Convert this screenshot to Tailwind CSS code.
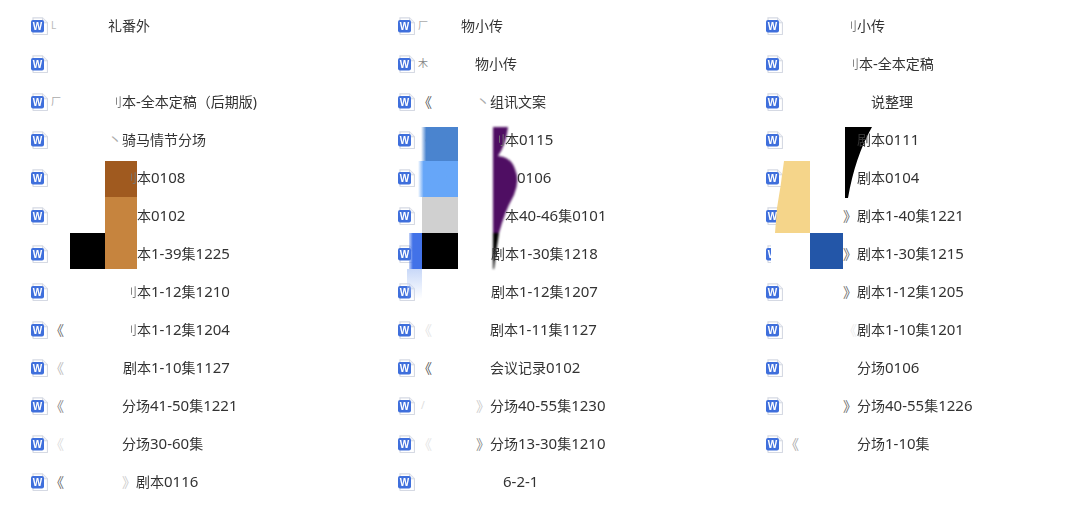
<!DOCTYPE html>
<html lang="en">
<head>
  <meta charset="UTF-8" />
  <title>Word files</title>
  <script src="https://cdn.jsdelivr.net/npm/@tailwindcss/browser@4"></script>
</head>
<body class="bg-white font-['Noto_Sans','Noto_Sans_CJK_SC',sans-serif] text-[14px] text-[#333]">

  <svg class="hidden">
    <symbol id="doc" viewBox="0 0 18 18">
      <path d="M3 .8h9.5L17.5 5.8v10.9a1 1 0 0 1-1 1H4a1 1 0 0 1-1-1z" fill="#fff" stroke="#d5d9e3" stroke-width="1.2" />
      <path d="M12.5 .8V5.8h5" fill="#eef1f6" stroke="#d5d9e3" />
      <rect x="1" y="3" width="13" height="12.5" rx="2" fill="#3f6fdc" />
    </symbol>
  </svg>

  <div class="relative w-[1080px] h-[515px] overflow-hidden">
    <div id="files" class="grid grid-cols-[367px_368px_1fr] pl-[30px] pt-[7px]"></div>

    <!-- colour blocks that sit over the file names -->
    <div class="absolute left-[105px] top-[161px] w-[32px] h-[36px] bg-[#a05a1f] blur-[0.6px]"></div>
    <div class="absolute left-[105px] top-[197px] w-[32px] h-[72px] bg-[#c6843e] blur-[0.6px]"></div>
    <div class="absolute left-[70px] top-[233px] w-[35px] h-[36px] bg-black"></div>

    <div class="absolute left-[421px] top-[127px] w-[37px] h-[34px] bg-linear-to-r from-[#4a84cf]/0 to-[#4a84cf] to-[14%]"></div>
    <div class="absolute left-[418px] top-[161px] w-[40px] h-[36px] bg-linear-to-r from-[#66a6f8]/0 to-[#66a6f8] to-[14%]"></div>
    <div class="absolute left-[422px] top-[197px] w-[36px] h-[36px] bg-[#d0d0d0]"></div>
    <div class="absolute left-[409px] top-[233px] w-[13px] h-[36px] bg-linear-to-r from-[#4272e8]/30 to-[#4272e8] to-[30%]"></div>
    <div class="absolute left-[407px] top-[269px] w-[15px] h-[30px] bg-linear-to-b from-[#c8d8f8] to-[#c8d8f8]/0"></div>
    <div class="absolute left-[422px] top-[233px] w-[36px] h-[36px] bg-black"></div>
    <svg class="absolute left-[493px] top-[127px] blur-[0.8px]" width="30" height="142" viewBox="0 0 30 142">
      <path d="M0 0H15Q13 18 5 29Q18 30 22 42Q27 54 21 68Q12 84 6 106H0z" fill="#4f0e63" />
      <path d="M0 106H6Q3 125 1 142H0z" fill="#000" />
    </svg>

    <svg class="absolute left-[845px] top-[127px] blur-[0.4px]" width="28" height="72" viewBox="0 0 28 72">
      <path d="M0 0H27Q10 30 3 71H0z" fill="#000" />
    </svg>
    <svg class="absolute left-[775px] top-[161px]" width="35" height="72" viewBox="0 0 35 72">
      <path d="M9 0H35V72H0Q1 60 2 47Q6 24 9 0z" fill="#f5d58a" />
    </svg>
    <div class="absolute left-[771px] top-[233px] w-[39px] h-[36px] bg-white"></div>
    <div class="absolute left-[810px] top-[233px] w-[33px] h-[36px] bg-[#2356a8]"></div>
  </div>

  <script>
    // [gap from icon to name, mark on the left, its classes, mark before the name, its colour, name]
    const columns = [
      [
        [60, "L", "ml-[3px] text-[10px] text-[#bbb]", "", "", "礼番外"],
        [60, "", "", "", "", ""],
        [60, "厂", "ml-[3px] text-[10px] text-[#aaa]", "", "", "刂本-全本定稿（后期版)"],
        [74, "", "", "丶", "text-[#aaa]", "骑马情节分场"],
        [75, "", "", "", "", "刂本0108"],
        [89, "", "", "", "", "本0102"],
        [89, "", "", "", "", "本1-39集1225"],
        [75, "", "", "", "", "刂本1-12集1210"],
        [75, "《", "ml-[2px] text-[#666]", "", "", "刂本1-12集1204"],
        [75, "《", "ml-[2px] text-[#bbb]", "", "", "剧本1-10集1127"],
        [74, "《", "ml-[2px] text-[#888]", "", "", "分场41-50集1221"],
        [74, "《", "ml-[2px] text-[#ddd]", "", "", "分场30-60集"],
        [88, "《", "ml-[2px] text-[#666]", "》", "text-[#ccc]", "剧本0116"]
      ],
      [
        [46, "厂", "ml-[3px] text-[10px] text-[#aaa]", "", "", "物小传"],
        [60, "木", "ml-[3px] text-[10px] text-[#888]", "", "", "物小传"],
        [75, "《", "ml-[3px] text-[#555]", "丶", "text-[#aaa]", "组讯文案"],
        [76, "《", "ml-[3px] text-[#888]", "", "", "刂本0115"],
        [102, "", "", "", "", "0106"],
        [90, "", "", "", "", "本40-46集0101"],
        [76, "", "", "", "", "剧本1-30集1218"],
        [76, "", "", "", "", "剧本1-12集1207"],
        [75, "《", "ml-[3px] text-[#e5e5e5]", "", "", "剧本1-11集1127"],
        [75, "《", "ml-[3px] text-[#555]", "", "", "会议记录0102"],
        [75, "/", "ml-[6px] text-[10px] text-[#ddd]", "》", "text-[#ccc]", "分场40-55集1230"],
        [75, "《", "ml-[3px] text-[#e5e5e5]", "》", "text-[#888]", "分场13-30集1210"],
        [88, "", "", "", "", "6-2-1"]
      ],
      [
        [60, "", "", "", "", "刂小传"],
        [62, "", "", "", "", "刂本-全本定稿"],
        [88, "", "", "", "", "说整理"],
        [74, "", "", "", "", "剧本0111"],
        [74, "", "", "", "", "剧本0104"],
        [74, "", "", "》", "text-[#666]", "剧本1-40集1221"],
        [74, "", "", "》", "text-[#666]", "剧本1-30集1215"],
        [74, "", "", "》", "text-[#666]", "剧本1-12集1205"],
        [74, "", "", "《", "text-[#eee]", "剧本1-10集1201"],
        [74, "", "", "", "", "分场0106"],
        [74, "", "", "》", "text-[#666]", "分场40-55集1226"],
        [74, "《", "ml-[2px] text-[#aaa]", "", "", "分场1-10集"]
      ]
    ];

    const files = document.getElementById("files");

    // digits and hyphens run a little larger than the Chinese around them,
    // and the half-hidden 刂 sits smaller, against the next character
    const sized = name => name
      .replace(/[0-9-]+/g, m => `<span class="text-[15px]">${m}</span>`)
      .replace("刂", `<span class="inline-block w-[14px] pl-[2px] text-[12px] text-[#777]">刂</span>`);

    columns.forEach(rows => {
      const col = document.createElement("div");
      rows.forEach(([gap, left, leftClass, before, beforeClass, name]) => {
        const row = document.createElement("div");
        row.className = "flex items-center h-[38px] whitespace-nowrap";
        row.innerHTML = `
          <span class="relative w-[18px] h-[18px] shrink-0 blur-[0.3px]">
            <svg class="w-[18px] h-[18px]"><use href="#doc" /></svg>
            <span class="absolute left-[1px] top-[3px] w-[13px] h-[12.5px] flex items-center justify-center text-[10px] font-bold text-white font-['Liberation_Sans',sans-serif]">W</span>
          </span>
          <span class="flex justify-between items-center shrink-0 -translate-y-px" style="width:${gap}px">
            <span class="${leftClass}">${left}</span><span class="${beforeClass}">${before}</span>
          </span>
          <span class="relative z-10 -translate-y-px blur-[0.25px]">${sized(name)}</span>`;
        col.appendChild(row);
      });
      files.appendChild(col);
    });
  </script>

</body>
</html>
